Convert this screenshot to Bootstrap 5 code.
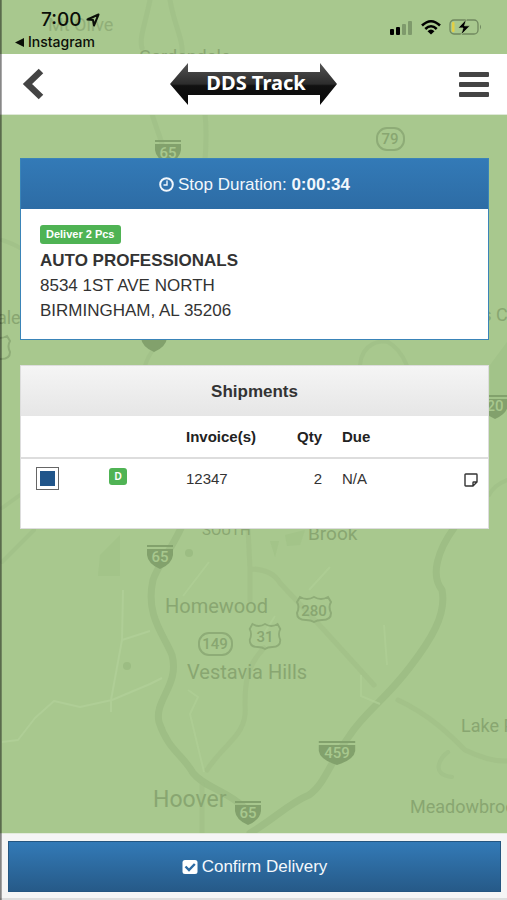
<!DOCTYPE html>
<html lang="en">
<head>
<meta charset="utf-8">
<meta name="viewport" content="width=device-width, initial-scale=1">
<title>DDS Track</title>
<link href="https://cdn.jsdelivr.net/npm/bootstrap@5.3.0/dist/css/bootstrap.min.css" rel="stylesheet">
<style>
  body { font-family: "Liberation Sans", Arial, sans-serif; font-size: 17px; line-height: 25px; color: #333; background: #a8c88e; }
  .screen { isolation: isolate; }
  .map-bg { z-index: -1; }
  .edge { width: 2px; background: linear-gradient(90deg, #0008, #0004); z-index: 5; pointer-events: none; }
  .status { height: 54px; font-family: Inter, sans-serif; color: #0b0f08; padding: 9px 25px 0 15px; }
  .status-time { font-size: 19px; line-height: 22px; font-weight: 500; padding-left: 26px; }
  .status-back { font-size: 14px; line-height: 22px; font-weight: 500; color: inherit; }
  .status-icons { padding-top: 10px; gap: 8px; }
  .topbar { height: 61px; background: #fff; border-bottom: 1px solid #dfe9d8; padding: 0 16px 0 20px; }
  .icon-btn { background: none; border: 0; padding: 0; line-height: 0; }
  .panel { background: #fff; border: 1px solid #ddd; }
  .panel-stop { border-color: #3a84b8; }
  .panel-top { height: 50px; }
  .panel-stop .panel-top { background: linear-gradient(#337ab7, #2d6ca5); color: #f1f7fc; }
  .panel-stop .panel-body { padding: 16px 19px 16px; }
  .panel-ship .panel-top { background: linear-gradient(#f5f5f5, #e6e6e6); font-weight: 700; }
  .tag { background: #4fb354; color: #fff; border-radius: 3px; font-weight: 700; display: inline-block; }
  .tag-pcs { font-size: 11px; line-height: 19px; padding: 0 6px; }
  .tag-d { font-size: 10px; line-height: 17px; width: 18px; text-align: center; vertical-align: top; }
  .ship-table { table-layout: fixed; font-size: 15px; line-height: 22px; color: #333; margin: 0 0 28px; width: 100%; }
  .ship-table th, .ship-table td { padding: 10px; vertical-align: middle; }
  .ship-table th { padding-bottom: 9px; color: #222; }
  .ship-table td { padding-top: 8px; }
  .ship-table thead tr { border-bottom: 2px solid #ddd; }
  .ship-table td:first-child { padding-left: 15px; }
  .c-pick { width: 78px; } .c-kind { width: 77px; } .c-inv { width: 111px; } .c-qty { width: 45px; }
  .pick { appearance: none; width: 23px; height: 23px; border: 1px solid #666; background: #fff; display: block; margin: 0; padding: 3px; }
  .pick:checked { background: #20558a content-box; }
  .bottombar { background: #f5f5f5; padding: 7px 6px 6px 8px; border-top: 1px solid #e3ebdd; }
  .bottomrule { border-top: 2px solid #ddd; background: #f5f5f5; height: 2px; }
  .btn-confirm { height: 51px; border: 1px solid #245580; border-radius: 0; background: linear-gradient(#337ab7, #265a88); color: #f4f8fc; font-size: 17px; gap: 4px; }
  .content { padding: 43px 18px 20px 20px; gap: 25px; }
</style>
<script src="https://cdn.jsdelivr.net/npm/bootstrap@5.3.0/dist/js/bootstrap.bundle.min.js"></script>
</head>
<body>
<div class="screen position-relative d-flex flex-column min-vh-100 overflow-hidden">

  <svg class="map-bg position-absolute top-0 start-0 w-100 h-100" viewBox="0 0 507 900" preserveAspectRatio="xMidYMid slice" aria-hidden="true" font-family="Roboto, sans-serif">
    <defs>
      <g id="interstate"><path d="M-13 -10H13V-8H-13Z"/><path d="M-13 -6H13V0Q12 9 0 14Q-12 9 -13 0Z"/></g>
      <path id="usroute" d="M-14 -12Q-7 -8 0 -12Q7 -8 14 -12L17 -7Q14 -2 17 4Q17 11 8 11Q3 11 0 13Q-3 11 -8 11Q-17 11 -17 4Q-14 -2 -17 -7Z"/>
    </defs>
    <g fill="none" stroke="#9ebe85" stroke-linecap="round" stroke-linejoin="round">
      <path stroke-width="5" d="M150 0C145 25 139 38 142 48M170 0C174 25 184 40 182 56M152 114C160 140 166 148 164 165M205 114C210 160 198 180 205 210" opacity=".6"/>
      <path stroke-width="7" d="M181 528C171 550 158 565 153 580C145 615 164 635 172 655C180 685 154 700 159 722C168 750 183 755 193 773C205 788 227 790 246 809"/>
      <path stroke-width="7" d="M454 528C438 550 430 575 442 590C447 615 430 641 410 667C385 700 365 712 350 735C330 762 325 784 309 795C289 803 273 820 250 833"/>
      <path stroke-width="5" d="M248 528L250 569Q272 569 280 583L324 630L374 685M250 569L250 600M264 648C246 667 245 684 245 705C248 735 225 742 207 770M202 785V833M398 700C430 715 450 735 465 750Q490 762 507 761" opacity=".55"/>
      <path stroke-width="4" d="M143 390C140 355 160 345 160 341M360 365C362 342 382 340 388 342C402 350 405 362 407 366M2 240Q14 244 20 248M2 508L20 495M2 562L34 530M489 495Q494 485 507 480" opacity=".6"/>
      <path stroke-width="4" d="M448 752C440 757 430 775 452 777" opacity=".5"/>
    </g>
    <g fill="none" stroke="#afce96" stroke-width="2" stroke-linejoin="round">
      <path d="M2 742L18 740L35 718L54 701L80 707L112 700L150 684L162 678M111 712V700L122 640L123 590M122 640L150 631"/>
      <path d="M183 596L209 562M260 640L275 616M309 590L330 567M188 690L198 697L190 714L204 772M384 625L387 665M361 675V696L380 704" opacity=".7"/>
    </g>
    <g fill="#9cbd83">
      <circle cx="189" cy="553" r="4"/><circle cx="127" cy="666" r="4"/><path d="M270 541H279L275 557ZM285 535L305 530L300 545L287 546ZM100 555L120 535V576H98Z" opacity=".4"/><path d="M490 365L507 342V400H490Z" opacity=".5"/>
    </g>
    <g fill="#88a671">
      <text x="48" y="31" font-size="18" opacity=".75">Mt Olive</text>
      <text x="139" y="63" font-size="18">Gardendale</text>
      <text x="-25" y="324" font-size="18">Adale</text>
      <text x="472" y="321" font-size="18">ds C</text>
      <text x="202" y="535" font-size="15">SOUTH</text>
      <text x="308" y="540" font-size="19">Brook</text>
      <text x="165" y="613" font-size="20">Homewood</text>
      <text x="187" y="679" font-size="20">Vestavia Hills</text>
      <text x="153" y="807" font-size="23">Hoover</text>
      <text x="461" y="732" font-size="18">Lake Purdy</text>
      <text x="410" y="813" font-size="18">Meadowbrook</text>
      <text x="267" y="845" font-size="16">River Ridge</text>
    </g>
    <g fill="#82a16c">
      <use href="#interstate" x="168" y="150"/><use href="#interstate" x="160" y="555"/><use href="#interstate" x="248" y="811"/>
      <use href="#interstate" x="154" y="338"/><use href="#interstate" x="495" y="405"/>
      <use href="#interstate" transform="translate(337 751) scale(1.4 1)"/>
    </g>
    <g fill="none" stroke="#8eac77" stroke-width="2">
      <rect x="377" y="128" width="27" height="22" rx="10"/><rect x="199" y="633" width="33" height="22" rx="10"/>
      <use href="#usroute" x="314" y="609"/><use href="#usroute" transform="translate(265 636) scale(.9 1)"/><use href="#usroute" x="-7" y="348"/>
    </g>
    <g font-size="15" text-anchor="middle" font-weight="500">
      <g fill="#a8c88e"><text x="168" y="158">65</text><text x="160" y="562">65</text><text x="248" y="818">65</text><text x="337" y="758">459</text><text x="495" y="411">20</text></g>
      <g fill="#88a671"><text x="390" y="144">79</text><text x="215" y="649">149</text><text x="314" y="616">280</text><text x="265" y="642">31</text></g>
    </g>
  </svg>
  <div class="edge position-absolute top-0 start-0 h-100"></div>

  <div class="status d-flex justify-content-between align-items-start">
    <div>
      <div class="status-time d-flex align-items-center gap-1">
        <span>7:00</span>
        <svg width="14" height="14" viewBox="0 0 14 14" fill="none" stroke="currentColor" stroke-width="2" stroke-linejoin="round" aria-hidden="true"><path d="M12.500 1.500L1.500 6.500L7 7L8 12.500Z"/></svg>
      </div>
      <a class="status-back d-flex align-items-center text-decoration-none" href="#">
        <svg class="me-1" width="9" height="9" viewBox="0 0 9 9" fill="currentColor" aria-hidden="true"><path d="M0 4.500L9 0V9Z"/></svg>Instagram
      </a>
    </div>
    <div class="status-icons d-flex">
      <svg width="23" height="16" viewBox="0 0 23 16" aria-hidden="true"><rect x="0" y="10" width="4" height="6" rx="1"/><rect x="6" y="8" width="4" height="8" rx="1"/><g fill="#7f9a6c"><rect x="12" y="5" width="4" height="11" rx="1"/><rect x="18" y="2" width="4" height="14" rx="1"/></g></svg>
      <svg width="20" height="16" viewBox="0 0 20 16" fill="none" stroke="#000" stroke-width="2.600" aria-hidden="true"><path d="M1 6.500Q10 -2 19 6.500M4.300 10Q10 4.500 15.700 10"/><path d="M6.500 12.200Q10 9 13.500 12.200L10 15.600Z" fill="#000" stroke="none"/></svg>
      <svg width="33" height="17" viewBox="0 0 33 17" aria-hidden="true"><rect x="1" y="1" width="28" height="14" rx="4" fill="none" stroke="#70885f" stroke-width="1.300"/><path d="M31 5.500Q33 8 31 10.500Z" fill="#70885f"/><rect x="3" y="3" width="2.500" height="10" rx="1" fill="#e2cf45"/><path d="M17.500 0L9 9H14L12 16L21 6.800H15.500Z" stroke="#a8c88e" stroke-width=".8"/></svg>
    </div>
  </div>

  <header class="topbar d-flex align-items-center justify-content-between">
    <button class="icon-btn" type="button" aria-label="Back">
      <svg width="26" height="34" viewBox="0 0 26 34" fill="none" stroke="#444" stroke-width="6.500"><path d="M21 4L7.500 17L21 30"/></svg>
    </button>
    <svg width="170" height="44" viewBox="0 0 170 44" role="img" aria-label="DDS Track">
      <defs><linearGradient id="arrowfill" x1="0" y1="0" x2="0" y2="1"><stop offset="0" stop-color="#555"/><stop offset=".5" stop-color="#2c2c2c"/><stop offset=".54" stop-color="#111"/><stop offset="1" stop-color="#080808"/></linearGradient></defs>
      <path fill="url(#arrowfill)" d="M2 22L20 1V10H152V1L169 22L152 43V33H20V43Z"/>
      <text x="88" y="28" text-anchor="middle" fill="#fff" font-family="Noto Sans, sans-serif" font-size="20" font-weight="700">DDS Track</text>
    </svg>
    <button class="icon-btn" type="button" aria-label="Menu">
      <svg width="32" height="28" viewBox="0 0 32 28" fill="#444"><rect x="0" y="2" width="30" height="5" rx="1"/><rect x="0" y="12" width="30" height="5" rx="1"/><rect x="0" y="22" width="30" height="5" rx="1"/></svg>
    </button>
  </header>

  <main class="content d-flex flex-column flex-grow-1">
    <section class="panel panel-stop">
      <div class="panel-top d-flex align-items-center justify-content-center gap-1">
        <svg width="15" height="15" viewBox="0 0 15 15" fill="none" stroke="currentColor" aria-hidden="true"><circle cx="7.500" cy="7.500" r="6.300" stroke-width="2"/><path d="M8 3.500V8H4.500" stroke-width="1.400"/></svg>
        <span>Stop Duration: <strong>0:00:34</strong></span>
      </div>
      <div class="panel-body">
        <div class="d-flex mb-1"><span class="tag tag-pcs">Deliver 2 Pcs</span></div>
        <address class="mb-0"><strong>AUTO PROFESSIONALS</strong><br>8534 1ST AVE NORTH<br>BIRMINGHAM, AL 35206</address>
      </div>
    </section>

    <section class="panel panel-ship">
      <div class="panel-top d-flex align-items-center justify-content-center">Shipments</div>
      <table class="ship-table">
        <colgroup><col class="c-pick"><col class="c-kind"><col class="c-inv"><col class="c-qty"><col><col class="c-qty"></colgroup>
        <thead><tr><th></th><th></th><th>Invoice(s)</th><th class="text-end">Qty</th><th>Due</th><th></th></tr></thead>
        <tbody><tr>
          <td><input class="pick" type="checkbox" checked aria-label="Select invoice 12347"></td>
          <td><span class="tag tag-d">D</span></td>
          <td>12347</td><td class="text-end">2</td><td>N/A</td>
          <td class="text-end"><button class="icon-btn" type="button" aria-label="Add note"><svg width="14" height="14" viewBox="0 0 14 14" fill="none" stroke="#333" stroke-width="1.400" stroke-linejoin="round"><path d="M1.700 1H12.300Q13 1 13 1.700V9L9 13H1.700Q1 13 1 12.300V1.700Q1 1 1.700 1ZM13 9H9.700Q9 9 9 9.700V13"/></svg></button></td>
        </tr></tbody>
      </table>
    </section>
  </main>

  <footer>
    <div class="bottombar">
      <button class="btn btn-confirm w-100 d-flex align-items-center justify-content-center" type="button">
        <svg width="16" height="16" viewBox="0 0 16 16" aria-hidden="true"><rect x=".5" y="1" width="15" height="14" rx="2.500" fill="#fff"/><path d="M3.500 7.500L7 11L12.800 5" fill="none" stroke="#2c6ba4" stroke-width="2.400"/></svg>
        Confirm Delivery
      </button>
    </div>
    <div class="bottomrule"></div>
  </footer>
</div>
</body>
</html>
